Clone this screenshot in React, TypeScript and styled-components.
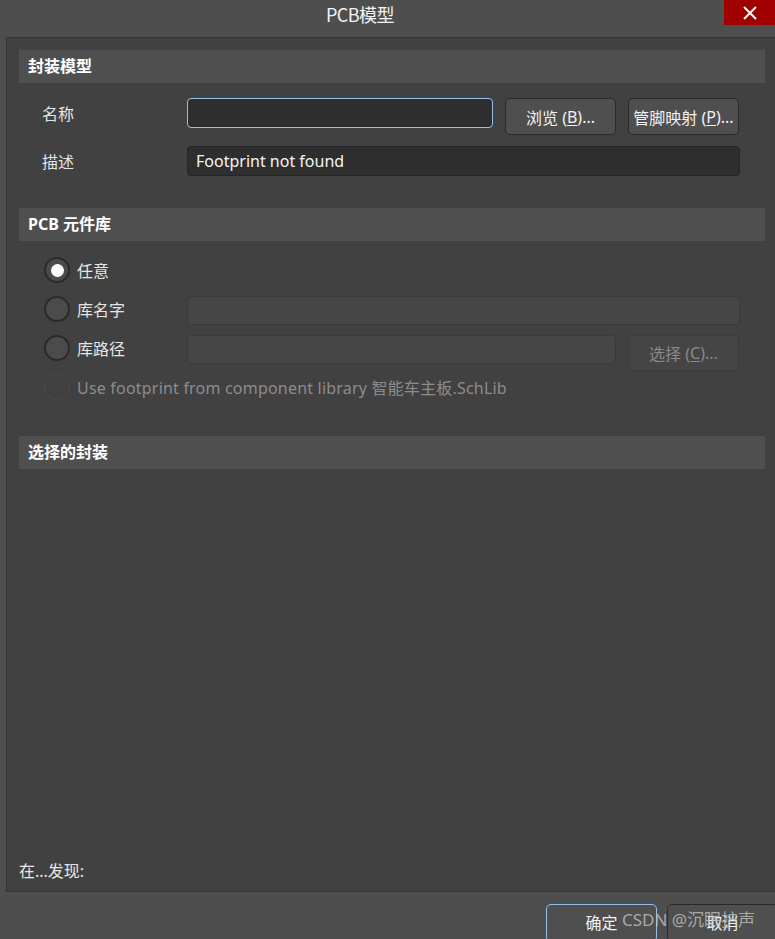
import React from "react";
import styled, { createGlobalStyle, css } from "styled-components";

const GlobalStyle = createGlobalStyle`
  html, body {
    margin: 0;
    padding: 0;
    background: #4e4e4e;
  }
  body {
    font-family: "Noto Sans", "Noto Sans CJK SC", sans-serif;
    color: #e8e8e8;
  }
`;

const Window = styled.div`
  position: relative;
  width: 775px;
  height: 939px;
  background: #4e4e4e;
  display: flex;
  flex-direction: column;
  overflow: hidden;
`;

const TitleBar = styled.div`
  height: 37px;
  flex-shrink: 0;
  display: flex;
  align-items: flex-start;
`;

const Title = styled.div`
  flex: 1;
  text-align: center;
  padding-top: 1px;
  padding-right: 4px;
  font-family: "Noto Sans CJK SC", sans-serif;
  font-size: 18px;
  line-height: 26px;
  color: #f2f2f2;
  letter-spacing: -0.5px;
`;

const CloseButton = styled.div`
  width: 51px;
  height: 25px;
  background: #a00000;
  display: flex;
  align-items: center;
  justify-content: center;
`;

const Panel = styled.div`
  flex: 1;
  margin-left: 6px;
  margin-right: -4px;
  background: #414141;
  border: 1px solid #363636;
  padding: 12px 13px 0 12px;
  display: flex;
  flex-direction: column;
`;

const SectionHeader = styled.div<{ $top?: number }>`
  height: 33px;
  margin-top: ${p => p.$top ?? 0}px;
  background: #4f4f4f;
  padding-left: 9px;
  font-size: 16px;
  font-weight: 700;
  line-height: 33px;
  color: #ffffff;
`;

const Row = styled.div<{ $top: number; $h: number; $indent?: number }>`
  display: grid;
  grid-template-columns: ${p => 133 - (p.$indent ?? 0)}px 306px 111px 112px;
  column-gap: 12px;
  margin-top: ${p => p.$top}px;
  margin-left: ${p => 23 + (p.$indent ?? 0)}px;
  height: ${p => p.$h}px;
  align-items: start;
`;

const Label = styled.div<{ $h: number }>`
  height: ${p => p.$h}px;
  display: flex;
  align-items: center;
  gap: 7px;
  font-size: 16px;
  color: #e6e6e6;
  white-space: nowrap;
`;

const Field = styled.div<{ $span: string; $focus?: boolean; $disabled?: boolean }>`
  grid-column: ${p => p.$span};
  box-sizing: border-box;
  height: ${p => (p.$disabled ? 29 : 30)}px;
  border-radius: 4px;
  padding-left: 8px;
  display: flex;
  align-items: center;
  font-size: 16px;
  color: #f4f4f4;
  background: #2e2e2e;
  border: 1px solid #262626;
  ${p =>
    p.$focus &&
    css`
      border: 1.5px solid #94c1ea;
    `}
  ${p =>
    p.$disabled &&
    css`
      background: #464646;
      border: 1px solid #3a3a3a;
    `}
`;

const Button = styled.div<{ $disabled?: boolean; $primary?: boolean; $col?: number }>`
  grid-column: ${p => p.$col ?? "auto"};
  box-sizing: border-box;
  width: 111px;
  height: ${p => (p.$disabled ? 36 : 37)}px;
  border-radius: 5px;
  background: #4f4f4f;
  border: 1.5px solid #2a2a2a;
  display: flex;
  align-items: center;
  justify-content: center;
  font-size: 16px;
  color: #f2f2f2;
  white-space: nowrap;
  ${p =>
    p.$disabled &&
    css`
      background: #454545;
      border: 1px solid #3c3c3c;
      color: #8a8a8a;
    `}
  ${p =>
    p.$primary &&
    css`
      border: 1.5px solid #94c1ea;
    `}
`;

const Key = styled.span`
  text-decoration: underline;
  text-underline-offset: 2px;
`;

const Radio = styled.span<{ $checked?: boolean; $disabled?: boolean }>`
  box-sizing: border-box;
  width: 26px;
  height: 26px;
  flex-shrink: 0;
  border-radius: 50%;
  border: 2px solid #2a2a2a;
  background: #4b4b4b;
  display: flex;
  align-items: center;
  justify-content: center;
  ${p =>
    p.$disabled &&
    css`
      background: #414141;
      border: 1px solid #4a4a4a;
    `}
  &::after {
    content: "";
    display: ${p => (p.$checked ? "block" : "none")};
    width: 13px;
    height: 13px;
    border-radius: 50%;
    background: #ffffff;
  }
`;

const DisabledText = styled.span`
  color: #8c8c8c;
  letter-spacing: 0.2px;
`;

const Spacer = styled.div`
  flex: 1;
`;

const FoundIn = styled.div`
  font-size: 16px;
  line-height: 20px;
  color: #e6e6e6;
  padding-bottom: 10px;
`;

const Footer = styled.div`
  height: 47px;
  flex-shrink: 0;
  display: flex;
  justify-content: flex-end;
  align-items: flex-start;
  gap: 10px;
  padding-top: 12px;
  margin-right: -3px;
  box-sizing: border-box;
`;

const FooterButton = styled(Button)`
  height: 38px;
  padding-bottom: 3px;
`;

const Watermark = styled.div`
  position: absolute;
  left: 622px;
  top: 906px;
  font-family: "Noto Sans", "Noto Sans CJK SC", sans-serif;
  font-size: 17px;
  color: rgba(200, 200, 200, 0.75);
  white-space: nowrap;
  pointer-events: none;
`;

export default function App() {
  return (
    <Window>
      <GlobalStyle />
      <TitleBar>
        <Title>PCB模型</Title>
        <CloseButton>
          <svg width="14" height="14" viewBox="0 0 14 14">
            <path d="M1 1 L13 13 M13 1 L1 13" stroke="#ffffff" strokeWidth="2" />
          </svg>
        </CloseButton>
      </TitleBar>

      <Panel>
        <SectionHeader>封装模型</SectionHeader>
        <Row $top={15} $h={37}>
          <Label $h={30}>名称</Label>
          <Field $span="2" $focus />
          <Button>
            浏览 (<Key>B</Key>)...
          </Button>
          <Button>
            管脚映射 (<Key>P</Key>)...
          </Button>
        </Row>
        <Row $top={11} $h={30}>
          <Label $h={30}>描述</Label>
          <Field $span="2 / 5">Footprint not found</Field>
        </Row>

        <SectionHeader $top={32}>PCB 元件库</SectionHeader>
        <Row $top={16} $h={26} $indent={2}>
          <Label $h={26}>
            <Radio $checked />
            任意
          </Label>
        </Row>
        <Row $top={13} $h={29} $indent={2}>
          <Label $h={26}>
            <Radio />
            库名字
          </Label>
          <Field $span="2 / 5" $disabled />
        </Row>
        <Row $top={10} $h={29} $indent={2}>
          <Label $h={26}>
            <Radio />
            库路径
          </Label>
          <Field $span="2 / 4" $disabled />
          <Button $disabled $col={4}>
            选择 (<Key>C</Key>)...
          </Button>
        </Row>
        <Row $top={10} $h={26} $indent={2}>
          <Label $h={26}>
            <Radio $disabled />
            <DisabledText>Use footprint from component library 智能车主板.SchLib</DisabledText>
          </Label>
        </Row>

        <SectionHeader $top={36}>选择的封装</SectionHeader>
        <Spacer />
        <FoundIn>在...发现:</FoundIn>
      </Panel>

      <Footer>
        <FooterButton $primary>确定</FooterButton>
        <FooterButton>取消</FooterButton>
      </Footer>
      <Watermark>CSDN @沉眠护声</Watermark>
    </Window>
  );
}
